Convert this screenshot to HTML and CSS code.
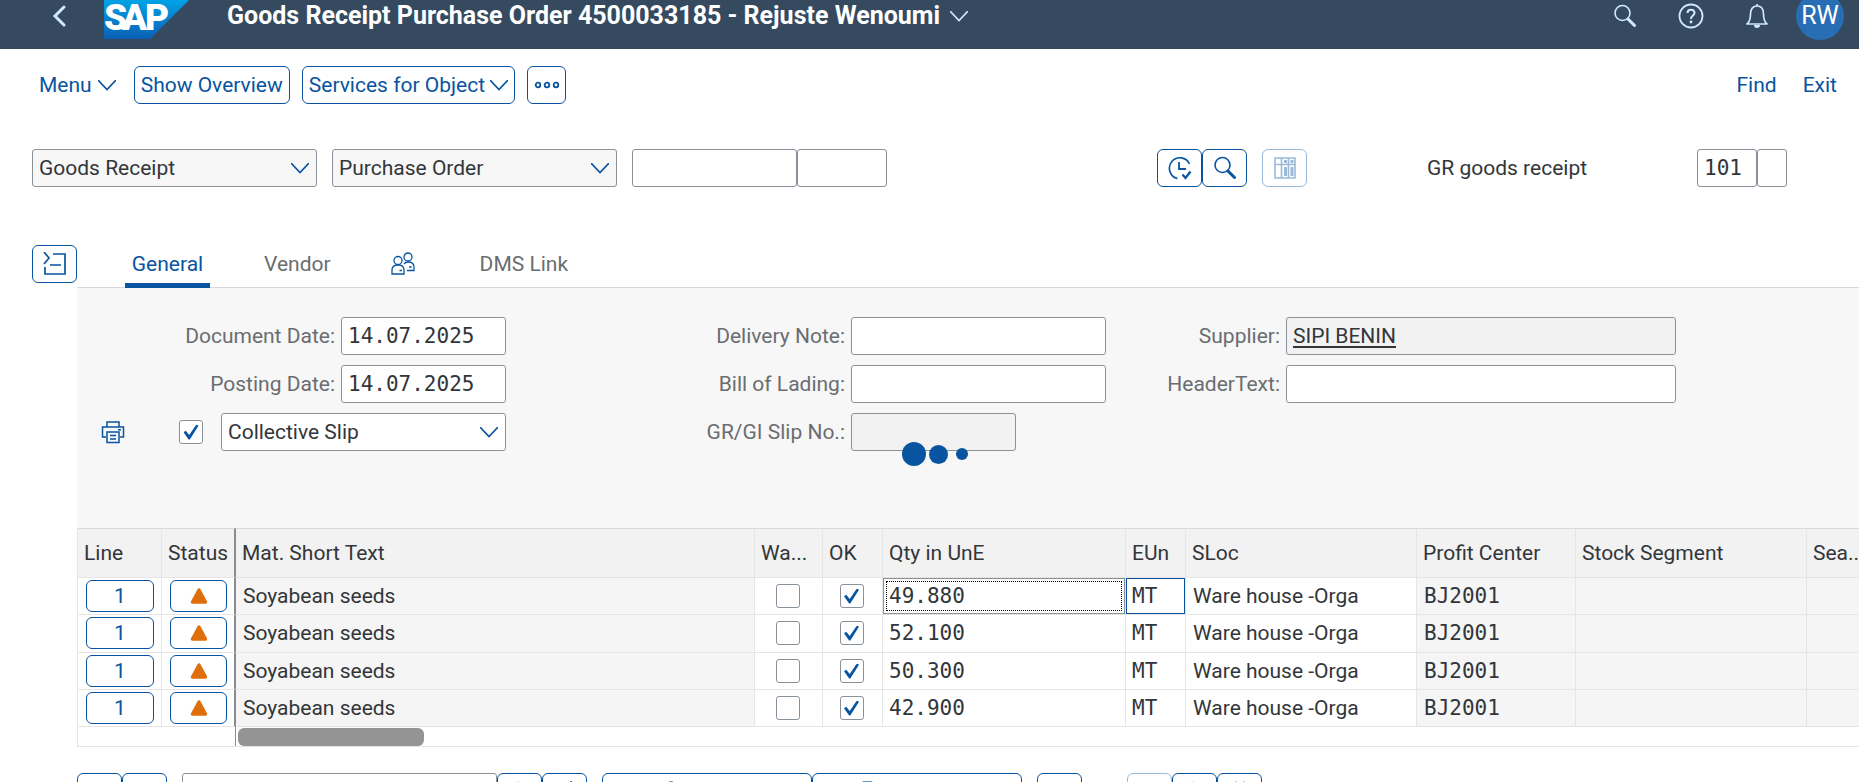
FILE: index.html
```html
<!DOCTYPE html>
<html lang="en">
<head>
<meta charset="utf-8">
<title>Goods Receipt Purchase Order</title>
<link rel="stylesheet" href="styles.css">
</head>
<body>
<svg class="sprite" aria-hidden="true">
  <symbol id="chevron" viewBox="0 0 18 11"><path d="M0 0l9 9.500L18 0" fill="none" stroke="currentColor" stroke-width="1.6"/></symbol>
  <symbol id="search" viewBox="0 0 24 24"><circle cx="9.500" cy="9" r="7.500" fill="none" stroke="currentColor" stroke-width="1.6"/><path d="M15 15l6.500 6.500" stroke="currentColor" stroke-width="3" stroke-linecap="round"/></symbol>
  <symbol id="warning" viewBox="0 0 18 16"><path d="M9 2L2.500 14h13z" fill="#df6e0c" stroke="#df6e0c" stroke-width="3.400" stroke-linejoin="round"/></symbol>
</svg>

<header class="shell">
  <button class="shell-btn back" aria-label="Back"><svg viewBox="0 0 14 22" width="14" height="22"><path d="M12 2L3 11l9 9" fill="none" stroke="currentColor" stroke-width="3" stroke-linecap="round"/></svg></button>
  <a class="logo" href="#" aria-label="Home"><svg viewBox="0 0 84 46" width="84" height="46">
    <defs><linearGradient id="sap" x1="0" y1="0" x2="0" y2="1"><stop offset="0" stop-color="#00aeef"/><stop offset="1" stop-color="#0a60b4"/></linearGradient></defs>
    <path d="M0 0h92L46 46H0z" fill="url(#sap)"/><text class="logo-text" x="0 18 41" y="37">SAP</text></svg></a>
  <h1 class="title">Goods Receipt Purchase Order 4500033185 - Rejuste Wenoumi</h1>
  <button class="shell-btn" aria-label="Title menu"><svg class="chevron"><use href="#chevron"/></svg></button>
  <div class="shell-actions">
    <button class="shell-btn" aria-label="Search"><svg class="icon"><use href="#search"/></svg></button>
    <button class="shell-btn" aria-label="Help"><svg viewBox="0 0 26 26" width="26" height="26"><circle cx="13" cy="13" r="11.500" fill="none" stroke="currentColor" stroke-width="1.8"/><path d="M9.500 10c0-4.500 7-4.500 7 0 0 2.500-3.500 2.800-3.500 6" fill="none" stroke="currentColor" stroke-width="2"/><circle cx="13" cy="19" r="1.400" fill="currentColor"/></svg></button>
    <button class="shell-btn" aria-label="Notifications"><svg viewBox="0 0 24 26" width="24" height="26"><path d="M2 21c3-2.500 3.500-5 3.500-10C5.500 6 8 3 12 3s6.500 3 6.500 8c0 5 .5 7.500 3.500 10zM12 1v2" fill="none" stroke="currentColor" stroke-width="1.700" stroke-linejoin="round"/><path d="M9 22h6a3 3 0 0 1-6 0z" fill="currentColor"/></svg></button>
    <button class="avatar" aria-label="User menu">RW</button>
  </div>
</header>

<main>
  <nav class="toolbar">
    <button class="link-btn menu">Menu <svg class="chevron"><use href="#chevron"/></svg></button>
    <button class="btn">Show Overview</button>
    <button class="btn">Services for Object <svg class="chevron"><use href="#chevron"/></svg></button>
    <button class="btn more" aria-label="More"><svg viewBox="0 0 26 8" width="26" height="8" fill="none" stroke="currentColor" stroke-width="1.800"><circle cx="4" cy="4" r="2.300"/><circle cx="13" cy="4" r="2.300"/><circle cx="22" cy="4" r="2.300"/></svg></button>
    <div class="toolbar-end"><button class="link-btn">Find</button><button class="link-btn">Exit</button></div>
  </nav>

  <section class="selection">
    <div class="select shaded"><select aria-label="Transaction"><option>Goods Receipt</option></select><svg class="chevron"><use href="#chevron"/></svg></div>
    <div class="select shaded"><select aria-label="Reference document"><option>Purchase Order</option></select><svg class="chevron"><use href="#chevron"/></svg></div>
    <div class="joined"><input class="field w-m" aria-label="Purchase order"><input class="field w-s" aria-label="Item"></div>
    <div class="joined actions">
      <button class="btn icon-btn" aria-label="Execute"><svg class="icon" viewBox="0 0 24 24" fill="none" stroke="currentColor" stroke-width="1.600"><path d="M9.500 22.500A10.500 10.500 0 1 1 21.500 8"/><path d="M11 6v7h7" stroke-width="1.800"/><path d="M14.500 18.500l3 3.500 5-6.500" stroke-width="2.200"/></svg></button>
      <button class="btn icon-btn" aria-label="Find document"><svg class="icon"><use href="#search"/></svg></button>
    </div>
    <button class="btn icon-btn" disabled aria-label="Table settings"><svg class="icon" viewBox="0 0 24 24" fill="none" stroke="currentColor" stroke-width="1.600"><path d="M2 2h20v20H2zM2 8.500h20M8.500 2v20M15.500 2v20"/><path d="M12.500 4v3M12.500 11v9M19 4v3M19 11v9" stroke-width="3"/></svg></button>
    <span class="movement">GR goods receipt</span>
    <div class="joined movement-type"><input class="field mono w-xs" value="101" aria-label="Movement type"><input class="field w-xxs" aria-label="Special stock"></div>
  </section>

  <section class="header-data">
    <button class="btn icon-btn collapse" aria-label="Collapse header data"><svg class="icon" viewBox="0 0 24 24" fill="none" stroke="currentColor" stroke-width="1.700"><path d="M1 0l5 6-5 6M10 2h12v20H2v-7M7 13h11"/></svg></button>
    <div class="header-main">
      <div class="tabs" role="tablist">
        <button class="tab active" role="tab">General</button>
        <button class="tab" role="tab">Vendor</button>
        <button class="tab tab-icon" role="tab" aria-label="Partners"><svg class="icon" viewBox="0 0 24 24" fill="none" stroke="currentColor" stroke-width="1.300"><circle cx="7" cy="8.500" r="4"/><circle cx="17" cy="5" r="4"/><path d="M1 22v-4c0-3 2-5 6-5s6 2 6 5v4zM13 12c1-1.500 2.500-2 4-2 4 0 6 2 6 5v3.500h-7M8.500 18.500H11M18 15h2.500"/></svg></button>
        <button class="tab" role="tab">DMS Link</button>
      </div>
      <div class="panel">
        <div class="group group-dates">
          <div class="row"><label for="docdate">Document Date:</label><input id="docdate" class="field mono w-m" value="14.07.2025"></div>
          <div class="row"><label for="postdate">Posting Date:</label><input id="postdate" class="field mono w-m" value="14.07.2025"></div>
          <div class="row print">
            <svg class="icon" viewBox="0 0 24 24" fill="none" stroke="currentColor" stroke-width="1.500"><path d="M6 7V2h12v5M5 17H1.500V7h21v10H19M6 12h12v10.500H6zM9 15.500h6M9 19h6M17 9.800h3"/></svg>
            <input type="checkbox" checked aria-label="Print slip">
            <div class="select"><select aria-label="Slip type"><option>Collective Slip</option></select><svg class="chevron"><use href="#chevron"/></svg></div>
          </div>
        </div>
        <div class="group group-notes">
          <div class="row"><label for="note">Delivery Note:</label><input id="note" class="field w-l"></div>
          <div class="row"><label for="bill">Bill of Lading:</label><input id="bill" class="field w-l"></div>
          <div class="row"><label for="slip">GR/GI Slip No.:</label><input id="slip" class="field w-m" readonly></div>
        </div>
        <div class="group group-supplier">
          <div class="row"><label for="supplier">Supplier:</label><input id="supplier" class="field w-xl supplier" value="SIPI BENIN" readonly></div>
          <div class="row"><label for="text">HeaderText:</label><input id="text" class="field w-xl"></div>
        </div>
      </div>
    </div>
  </section>

  <section class="items">
    <table>
      <colgroup><col class="c-line"><col class="c-status"><col class="c-text"><col class="c-wa"><col class="c-ok"><col class="c-qty"><col class="c-eun"><col class="c-sloc"><col class="c-profit"><col class="c-stock"><col class="c-sea"></colgroup>
      <thead><tr><th>Line</th><th class="frozen">Status</th><th>Mat. Short Text</th><th>Wa...</th><th>OK</th><th>Qty in UnE</th><th>EUn</th><th>SLoc</th><th>Profit Center</th><th>Stock Segment</th><th>Sea...</th></tr></thead>
      <tbody>
        <tr><td class="action"><button class="btn cell-btn">1</button></td><td class="action frozen"><button class="btn cell-btn" aria-label="Warning"><svg class="warn"><use href="#warning"/></svg></button></td><td class="locked">Soyabean seeds</td><td class="check"><input type="checkbox" aria-label="Warning flag"></td><td class="check"><input type="checkbox" checked aria-label="Item OK"></td><td class="edit focus"><input class="mono" value="49.880" aria-label="Quantity"></td><td class="edit hover"><input class="mono" value="MT" aria-label="Unit"></td><td>Ware house -Orga</td><td class="locked mono">BJ2001</td><td class="locked"></td><td class="locked"></td></tr>
        <tr><td class="action"><button class="btn cell-btn">1</button></td><td class="action frozen"><button class="btn cell-btn" aria-label="Warning"><svg class="warn"><use href="#warning"/></svg></button></td><td class="locked">Soyabean seeds</td><td class="check"><input type="checkbox" aria-label="Warning flag"></td><td class="check"><input type="checkbox" checked aria-label="Item OK"></td><td class="edit"><input class="mono" value="52.100" aria-label="Quantity"></td><td class="edit"><input class="mono" value="MT" aria-label="Unit"></td><td>Ware house -Orga</td><td class="locked mono">BJ2001</td><td class="locked"></td><td class="locked"></td></tr>
        <tr><td class="action"><button class="btn cell-btn">1</button></td><td class="action frozen"><button class="btn cell-btn" aria-label="Warning"><svg class="warn"><use href="#warning"/></svg></button></td><td class="locked">Soyabean seeds</td><td class="check"><input type="checkbox" aria-label="Warning flag"></td><td class="check"><input type="checkbox" checked aria-label="Item OK"></td><td class="edit"><input class="mono" value="50.300" aria-label="Quantity"></td><td class="edit"><input class="mono" value="MT" aria-label="Unit"></td><td>Ware house -Orga</td><td class="locked mono">BJ2001</td><td class="locked"></td><td class="locked"></td></tr>
        <tr><td class="action"><button class="btn cell-btn">1</button></td><td class="action frozen"><button class="btn cell-btn" aria-label="Warning"><svg class="warn"><use href="#warning"/></svg></button></td><td class="locked">Soyabean seeds</td><td class="check"><input type="checkbox" aria-label="Warning flag"></td><td class="check"><input type="checkbox" checked aria-label="Item OK"></td><td class="edit"><input class="mono" value="42.900" aria-label="Quantity"></td><td class="edit"><input class="mono" value="MT" aria-label="Unit"></td><td>Ware house -Orga</td><td class="locked mono">BJ2001</td><td class="locked"></td><td class="locked"></td></tr>
      </tbody>
    </table>
    <div class="scroll-row"><div class="scroll-frozen"></div><div class="scroll-track"><div class="thumb"></div></div></div>
  </section>

  <section class="footer-bar">
    <div class="joined"><button class="btn icon-btn" aria-label="Detail"></button><button class="btn icon-btn" aria-label="Split"></button></div>
    <div class="joined"><input class="field w-find" aria-label="Find item"><button class="btn icon-btn" aria-label="Find"><svg class="icon low"><use href="#search"/></svg></button><button class="btn icon-btn" aria-label="Find next"><svg class="icon" viewBox="0 0 24 24"><path d="M18 1v6M15 4h6" stroke="currentColor" stroke-width="1.500"/></svg></button></div>
    <div class="joined"><button class="btn wide" aria-label="Contents"><svg class="icon left" viewBox="0 0 24 24"><path d="M9 1h4l-2 6z" fill="currentColor" opacity=".6"/></svg></button><button class="btn wide" aria-label="Distribute"><svg class="icon right" viewBox="0 0 24 24"><path d="M5 1.500h9v8H5z" fill="none" stroke="currentColor" opacity=".6"/></svg></button></div>
    <button class="btn icon-btn" aria-label="Copy"></button>
    <div class="joined paging"><button class="btn icon-btn" disabled aria-label="Delete"></button><button class="btn icon-btn" aria-label="Search items"><svg class="icon low"><use href="#search"/></svg></button><button class="btn icon-btn" aria-label="Stock overview"><svg class="icon" viewBox="0 0 24 24" fill="none" stroke="currentColor"><path d="M8 6V1M16 6V1" opacity=".6"/></svg></button></div>
  </section>
</main>

<div class="busy" role="status" aria-label="Loading"><i class="dot big"></i><i class="dot mid"></i><i class="dot small"></i></div>
</body>
</html>
```
FILE: styles.css
```css
* { box-sizing: border-box; }

body {
  margin: 0;
  height: 100vh;
  overflow: hidden;
  background: #fff;
  color: #32363a;
  font: 21px/28px Roboto, "Liberation Sans", sans-serif;
}

button, input, select { font: inherit; color: inherit; margin: 0; }
button { cursor: pointer; }
.sprite { position: absolute; width: 0; height: 0; }
.mono { font-family: "DejaVu Sans Mono", "Liberation Mono", monospace; }
.icon { width: 24px; height: 24px; flex: none; }
.chevron { width: 18px; height: 11px; flex: none; }

.shell {
  display: flex;
  align-items: center;
  height: 66px;
  margin-top: -17px;
  padding: 0 15px 0 46px;
  background: #354a5f;
  color: #fff;
}
.shell-btn {
  display: flex;
  padding: 0 6px;
  border: 0;
  background: none;
  color: #d1e8ff;
}
.logo { display: flex; margin-left: 32px; }
.logo svg { overflow: visible; }
.logo-text { font: 900 37px Roboto, sans-serif; fill: #fff; }
.title { margin: 0 4px 0 39px; font-size: 25px; font-weight: 700; white-space: nowrap; }
.shell-actions { display: flex; align-items: center; gap: 29px; margin-left: auto; }
.avatar {
  width: 48px;
  height: 48px;
  padding: 0;
  border: 0;
  border-radius: 50%;
  background: #286eb4;
  color: #fff;
  font-size: 25px;
}
.shell-actions .avatar { margin-left: -8px; }

/* Buttons and fields */
.btn {
  display: flex;
  align-items: center;
  justify-content: center;
  gap: 5px;
  height: 38px;
  padding: 0 6px;
  border: 1px solid #0854a0;
  border-radius: 6px;
  background: #fff;
  color: #0854a0;
  white-space: nowrap;
}
.btn:disabled { opacity: .4; }
.icon-btn { width: 45px; padding: 0; }
.link-btn {
  display: flex;
  align-items: center;
  gap: 6px;
  padding: 0;
  border: 0;
  background: none;
  color: #0854a0;
}
.field {
  height: 38px;
  padding: 0 6px;
  border: 1px solid #89919a;
  border-radius: 3px;
  background: #fff;
}
.field:read-only { background: #f2f2f2; }
.w-xxs { width: 30px; }
.w-xs { width: 60px; }
.w-s { width: 90px; }
.w-m { width: 165px; }
.w-l { width: 255px; }
.w-xl { width: 390px; }
.w-find { width: 315px; }
.joined { display: flex; }

.select { display: grid; align-items: center; width: 285px; height: 38px; }
.select > * { grid-area: 1 / 1; }
.select .chevron { justify-self: end; margin-right: 8px; color: #0854a0; pointer-events: none; }
.select select {
  width: 100%;
  height: 38px;
  padding: 0 6px;
  border: 1px solid #89919a;
  border-radius: 3px;
  background: #fff;
  appearance: none;
}
.select.shaded select { background: #f7f7f7; }

input[type="checkbox"] {
  display: grid;
  place-items: center;
  width: 24px;
  height: 24px;
  border: 1px solid #89919a;
  border-radius: 3px;
  background: #fff;
  appearance: none;
}
input[type="checkbox"]:checked::before {
  content: "";
  width: 15px;
  height: 15px;
  background: #0854a0;
  clip-path: polygon(0 52%, 15% 42%, 38% 70%, 86% 0, 100% 8%, 42% 100%, 34% 100%);
}

/* Toolbar */
.toolbar { display: flex; align-items: center; gap: 12px; padding: 17px 22px 0 39px; }
.menu { margin-right: 6px; }
.more { width: 39px; padding: 0; }
.toolbar-end { display: flex; gap: 26px; margin-left: auto; }

/* Document selection */
.selection { display: flex; align-items: center; gap: 15px; padding: 45px 72px 0 32px; }
.actions { margin-left: 255px; }
.movement { margin-left: 105px; }
.movement-type { margin-left: auto; }

/* Header data */
.header-data { display: flex; align-items: flex-start; padding: 58px 0 0 32px; }
.collapse { height: 38px; flex: none; }
.header-main { flex: 1; }
.tabs { display: flex; gap: 48px; height: 43px; padding-left: 48px; border-bottom: 1px solid #d9d9d9; }
.tab {
  display: flex;
  align-items: center;
  justify-content: center;
  height: 43px;
  padding: 0 6px;
  border: 0;
  border-bottom: 5px solid transparent;
  background: none;
  color: #6a6d70;
}
.tab.active { min-width: 85px; border-color: #0854a0; color: #0854a0; }
.tab-icon { margin-right: 5px; color: #0854a0; }
.panel { display: flex; height: 240px; padding-top: 29px; background: #f7f7f7; color: #6a6d70; }
.group { display: flex; flex-direction: column; gap: 10px; }
.group-dates { width: 429px; }
.group-notes { width: 600px; }
.group-supplier { width: 570px; }
.row { display: flex; align-items: center; gap: 6px; height: 38px; }
.row .field, .row .select { color: #32363a; }
.row .field { flex: none; }
.row label { text-align: right; white-space: nowrap; }
.group-dates label { width: 258px; }
.group-notes label { width: 339px; }
.group-supplier label { width: 174px; }
.print { padding-left: 24px; color: #0854a0; gap: 18px; }
.print input { margin-left: 36px; }
.supplier { text-decoration: underline; text-decoration-thickness: 2px; text-underline-offset: 3px; }

/* Items table */
.items { margin-left: 77px; overflow: hidden; border: 1px solid #e5e5e5; border-width: 0 0 1px 1px; }
table { width: 1808px; border-collapse: separate; border-spacing: 0; table-layout: fixed; }
.c-line { width: 84px; }
.c-status { width: 74px; }
.c-text { width: 519px; }
.c-wa { width: 68px; }
.c-ok { width: 60px; }
.c-qty { width: 243px; }
.c-eun { width: 60px; }
.c-sloc { width: 231px; }
.c-profit { width: 159px; }
.c-stock { width: 231px; }
.c-sea { width: 79px; }
th, td { border: solid #e5e5e5; border-width: 0 1px 1px 0; text-align: left; white-space: nowrap; }
th { height: 50px; padding: 0 6px; border-top: 1px solid #d9d9d9; background: #f2f2f2; font-weight: 400; }
td { height: 37px; padding: 0 7px; }
tbody tr:nth-child(2) td { height: 38px; padding-bottom: 1px; }
.locked { background: #f5f5f5; }
.frozen { border-right: 2px solid #8c8c8c; }
.action { padding: 0 7px 0 8px; }
.cell-btn { width: 100%; height: 32px; }
.warn { width: 18px; height: 16px; }
td.check { padding: 0 8px 0 6px; }
td.check input { margin: 0 auto; }
td.edit { padding: 0; }
td.edit input {
  display: block;
  width: 100%;
  height: 36px;
  padding: 0 6px;
  border: 0;
  background: none;
}
td.focus input { border: 1px solid #89919a; padding: 0 5px; outline: 1px dotted #000; outline-offset: -4px; }
td.hover input { border: 1px solid #0854a0; padding: 0 5px; }
.scroll-row { display: flex; height: 19px; }
.scroll-frozen { width: 158px; border-right: 1px solid #8c8c8c; }
.scroll-track { flex: 1; padding: 1px 2px 0; }
.thumb { width: 186px; height: 18px; border-radius: 6px; background: #949494; }

/* Lower toolbar */
.footer-bar { display: flex; gap: 15px; padding: 26px 0 0 77px; }
.low { width: 22px; height: 22px; opacity: .6; }
.wide { width: 210px; }
.wide .left { margin-right: 70px; }
.wide .right { margin-right: 94px; }
.paging { margin-left: 30px; }

/* Busy indicator over the page */
.busy {
  position: absolute;
  top: 442px;
  left: 17px;
  right: 0;
  display: grid;
  grid-template-columns: repeat(3, 24px);
  place-content: center;
  place-items: center;
  pointer-events: none;
}
.dot { border-radius: 50%; background: #0854a0; }
.big { width: 24px; height: 24px; }
.mid { width: 19px; height: 19px; }
.small { width: 12px; height: 12px; }
```
